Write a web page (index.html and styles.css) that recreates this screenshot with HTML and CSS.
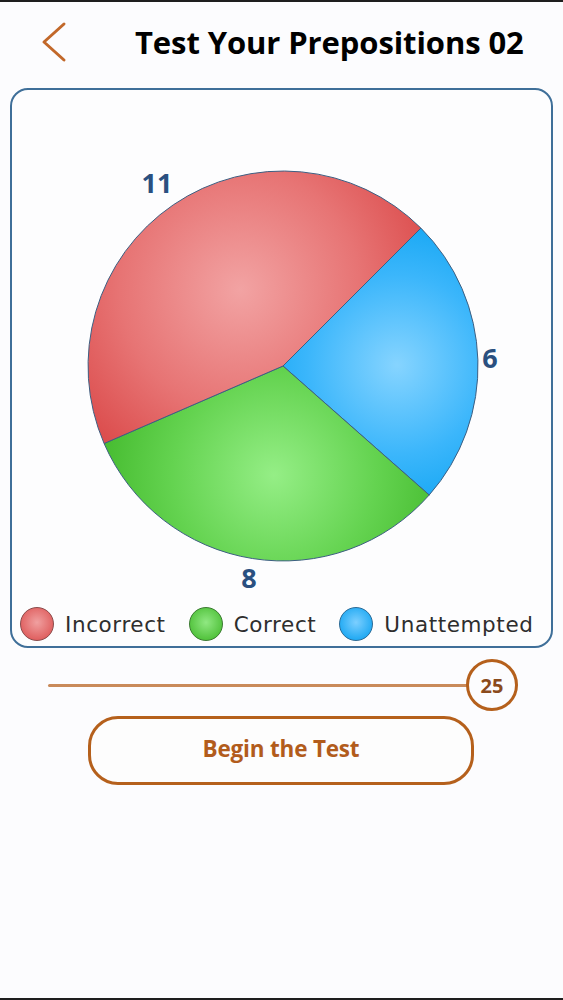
FILE: index.html
```html
<!DOCTYPE html>
<html>
<head>
<meta charset="utf-8">
<link rel="stylesheet" href="styles.css">
</head>
<body>
<div class="screen">
  <header class="header">
    <svg class="back" width="30" height="42" viewBox="0 0 30 42">
      <polyline points="24,3 4,21 24,39" fill="none" stroke="#c2682a" stroke-width="3" stroke-linecap="round" stroke-linejoin="round"/>
    </svg>
    <h1 class="title">Test Your Prepositions 02</h1>
  </header>

  <section class="card">
    <svg class="chart" width="539" height="506" viewBox="0 0 539 506">
      <defs>
        <radialGradient id="gRed" gradientUnits="userSpaceOnUse" cx="228" cy="200" r="200">
          <stop offset="0" stop-color="#f2a3a3"/>
          <stop offset="0.6" stop-color="#e77474"/>
          <stop offset="1" stop-color="#dc4e4e"/>
        </radialGradient>
        <radialGradient id="gGreen" gradientUnits="userSpaceOnUse" cx="262" cy="385" r="170">
          <stop offset="0" stop-color="#95ee86"/>
          <stop offset="0.6" stop-color="#64d350"/>
          <stop offset="1" stop-color="#48bd32"/>
        </radialGradient>
        <radialGradient id="gBlue" gradientUnits="userSpaceOnUse" cx="385" cy="275" r="150">
          <stop offset="0" stop-color="#86d4ff"/>
          <stop offset="0.6" stop-color="#3bb6fb"/>
          <stop offset="1" stop-color="#14a6f3"/>
        </radialGradient>
      </defs>
      <g stroke="#3d5f82" stroke-width="1" stroke-linejoin="round">
        <path d="M271,276 L408.9,138.1 A195,195 0 0 1 417.2,405.0 Z" fill="url(#gBlue)"/>
        <path d="M271,276 L417.2,405.0 A195,195 0 0 1 92.1,353.5 Z" fill="url(#gGreen)"/>
        <path d="M271,276 L92.1,353.5 A195,195 0 0 1 408.9,138.1 Z" fill="url(#gRed)"/>
      </g>
      <g class="num" fill="#2a5080" text-anchor="middle">
        <text x="145" y="103">11</text>
        <text x="478" y="278">6</text>
        <text x="237" y="498">8</text>
      </g>
    </svg>
    <div class="legend">
      <div class="item"><span class="dot red"></span><span class="lbl">Incorrect</span></div>
      <div class="item"><span class="dot green"></span><span class="lbl">Correct</span></div>
      <div class="item"><span class="dot blue"></span><span class="lbl">Unattempted</span></div>
    </div>
  </section>

  <div class="slider">
    <div class="track"></div>
    <div class="knob">25</div>
  </div>

  <button class="begin">Begin the Test</button>
</div>
</body>
</html>
```

FILE: styles.css
```css
* { box-sizing: border-box; }
html, body { margin: 0; padding: 0; }
body {
  background: #fcfcfe;
  font-family: "Open Sans", "Liberation Sans", sans-serif;
}
.screen {
  width: 563px;
  height: 1000px;
  border-top: 2px solid #1e1e1e;
  border-bottom: 2px solid #1e1e1e;
  background: #fcfcfe;
  display: flex;
  flex-direction: column;
}
.header {
  height: 86px;
  display: flex;
  align-items: center;
  padding-left: 40px;
  padding-bottom: 6px;
}
.back { display: block; }
.title {
  margin: 0 0 0 65px;
  font-size: 31px;
  font-weight: 700;
  color: #000;
  letter-spacing: -0.1px;
  white-space: nowrap;
}
.card {
  margin-left: 10px;
  width: 543px;
  height: 560px;
  border: 2px solid #3f6f99;
  border-radius: 18px;
  background: #fdfdfe;
  display: flex;
  flex-direction: column;
}
.chart { display: block; }
.num text {
  font-family: "Open Sans", "Liberation Sans", sans-serif;
  font-weight: 700;
  font-size: 27px;
}
.legend {
  margin-top: 11px;
  padding-left: 8px;
  display: flex;
  align-items: center;
  gap: 23px;
}
.item {
  display: flex;
  align-items: center;
  gap: 11px;
}
.dot {
  width: 34px;
  height: 34px;
  border-radius: 50%;
  border: 1px solid #555;
  flex: none;
}
.dot.red { background: radial-gradient(circle at 50% 45%, #f0a0a0, #de5a5a 80%); border-color: #8a4a4a; }
.dot.green { background: radial-gradient(circle at 50% 45%, #90e882, #4cbf36 80%); border-color: #3a7a30; }
.dot.blue { background: radial-gradient(circle at 50% 45%, #7ccfff, #18a6f2 80%); border-color: #2a6a96; }
.lbl {
  font-family: "DejaVu Sans", sans-serif;
  font-weight: 400;
  font-size: 21.5px;
  color: #2e2e2e;
  letter-spacing: 0.6px;
  white-space: nowrap;
}
.slider {
  margin-top: 11px;
  padding-left: 48px;
  display: flex;
  align-items: center;
  height: 52px;
}
.track {
  width: 420px;
  height: 3px;
  background: #c98a5a;
  border-radius: 2px;
}
.knob {
  width: 52px;
  height: 52px;
  margin-left: -2px;
  border: 3px solid #b5601c;
  border-radius: 50%;
  display: flex;
  align-items: center;
  justify-content: center;
  font-weight: 700;
  font-size: 20px;
  color: #8a4a1c;
  background: #fcfcfe;
}
.begin {
  margin: 5px 0 0 88px;
  width: 386px;
  height: 69px;
  border: 3px solid #b5601c;
  border-radius: 30px;
  background: #fdfdfd;
  font-family: "Open Sans", "Liberation Sans", sans-serif;
  font-weight: 700;
  font-size: 22.5px;
  color: #b25c1c;
  padding: 0 0 4px 0;
  letter-spacing: -0.2px;
}
```
